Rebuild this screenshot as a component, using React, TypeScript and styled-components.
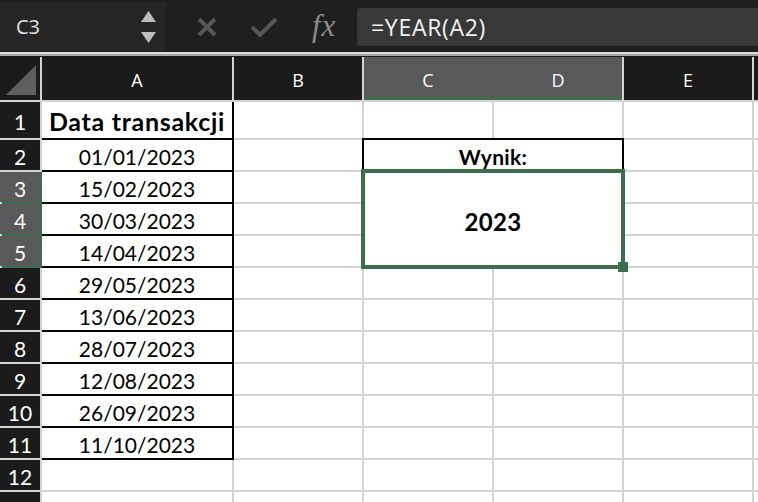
import * as React from "react";
import styled, { createGlobalStyle, css } from "styled-components";

const GREEN = "#3d6e4b";
const HILITE = "#595959";

const GlobalStyle = createGlobalStyle`
  html, body {
    margin: 0;
    padding: 0;
    background: #ffffff;
    overflow: hidden;
  }
  body {
    width: 758px;
    height: 502px;
    font-family: "Open Sans", "Liberation Sans", sans-serif;
  }
`;

const Page = styled.div`
  width: 758px;
  height: 502px;
  display: flex;
  flex-direction: column;
  overflow: hidden;
`;

const FormulaBar = styled.div`
  height: 51px;
  flex: none;
  display: flex;
  align-items: stretch;
  background: #1f1f1f;
  padding: 2px 0 0 0;
  box-sizing: border-box;
`;

const NameBox = styled.div`
  width: 166px;
  display: flex;
  align-items: center;
  justify-content: space-between;
  padding: 0 10px 0 16px;
  box-sizing: border-box;
  background: #262626;
  color: #e4e4e4;
  font-size: 20px;
`;

const Stepper = styled.div`
  display: flex;
  flex-direction: column;
  gap: 10px;
`;

const Actions = styled.div`
  width: 191px;
  display: flex;
  align-items: center;
  padding-left: 30px;
  gap: 32px;
  box-sizing: border-box;
`;

const Fx = styled.span`
  font-family: "Liberation Serif", "DejaVu Serif", serif;
  font-style: italic;
  font-size: 31px;
  color: #8c8c8c;
  margin-left: 2px;
  margin-top: -2px;
  letter-spacing: 1px;
`;

const FormulaInput = styled.div`
  flex: 1;
  margin: 6px 0 5px 0;
  background: #383838;
  border-radius: 3px 0 0 3px;
  color: #f2f2f2;
  font-size: 23px;
  letter-spacing: 0.7px;
  display: flex;
  align-items: center;
  padding-left: 14px;
`;

const Divider = styled.div`
  height: 6px;
  flex: none;
  background: linear-gradient(#1f1f1f 0 1px, #dcdcdc 1px 3px, #a8a8a8 3px 5px, #1b1b1b 5px);
`;

const Sheet = styled.div`
  flex: 1;
  display: grid;
  grid-template-columns: 40px 190px 128px 128px 128px 128px 1fr;
  grid-template-rows: 43px 36px repeat(12, 30px);
  gap: 2px;
  background: #d3d3d3;
  overflow: hidden;
`;

const HeaderCell = styled.div<{ $active?: boolean; $joinRight?: boolean }>`
  background: ${(p) => (p.$active ? HILITE : "#1b1b1b")};
  color: #ffffff;
  font-size: 18px;
  display: flex;
  align-items: center;
  justify-content: center;
  padding-top: 2px;
  box-sizing: border-box;
  ${(p) =>
    p.$active &&
    css`
      box-shadow: inset 0 -3px 0 ${GREEN}
        ${p.$joinRight ? `, 2px 0 0 ${HILITE}, 2px -3px 0 ${HILITE} inset` : ""};
    `}
`;

const Corner = styled.div`
  background: #1b1b1b;
  display: flex;
  align-items: flex-end;
  justify-content: flex-end;
  padding: 0 4px 5px 0;
`;

const RowHead = styled.div<{ $active?: boolean }>`
  background: ${(p) => (p.$active ? HILITE : "#1b1b1b")};
  color: #ffffff;
  font-family: "Lato", "Open Sans", sans-serif;
  font-size: 21px;
  display: flex;
  align-items: center;
  justify-content: center;
  padding-top: 3px;
  box-sizing: border-box;
  ${(p) =>
    p.$active &&
    css`
      box-shadow: 2px 0 0 ${GREEN}, 2px 2px 0 ${GREEN};
    `}
`;

const Cell = styled.div<{ $bold?: boolean; $boxed?: boolean }>`
  background: #ffffff;
  color: #000000;
  font-family: "Lato", "Carlito", sans-serif;
  font-size: ${(p) => (p.$bold ? "25px" : "21px")};
  font-weight: ${(p) => (p.$bold ? 700 : 400)};
  letter-spacing: ${(p) => (p.$bold ? "0.7px" : "0")};
  display: flex;
  align-items: center;
  justify-content: center;
  padding-top: 2px;
  box-sizing: border-box;
  white-space: nowrap;
  ${(p) =>
    p.$boxed &&
    css`
      box-shadow: 2px 0 0 #000, 0 2px 0 #000, 2px 2px 0 #000;
    `}
`;

const Merged = styled.div<{ $col: string; $row: string }>`
  grid-column: ${(p) => p.$col};
  grid-row: ${(p) => p.$row};
  background: #ffffff;
  font-family: "Lato", "Carlito", sans-serif;
  font-weight: 700;
  display: flex;
  justify-content: center;
  position: relative;
  box-sizing: border-box;
`;

const LabelCell = styled(Merged)`
  align-items: flex-end;
  font-size: 21px;
  line-height: 1;
  padding-bottom: 3px;
  letter-spacing: 0.3px;
  box-shadow: 0 0 0 2px #000;
`;

const ResultCell = styled(Merged)`
  align-items: center;
  font-size: 24px;
  padding-top: 4px;
  letter-spacing: 0.3px;
  box-shadow: 0 0 0 3px ${GREEN}, inset 0 0 0 1px ${GREEN};
`;

const Handle = styled.div`
  position: absolute;
  right: -6px;
  bottom: -6px;
  width: 10px;
  height: 10px;
  background: ${GREEN};
`;

const columns = ["A", "B", "C", "D", "E", ""];

const dates = [
  "01/01/2023",
  "15/02/2023",
  "30/03/2023",
  "14/04/2023",
  "29/05/2023",
  "13/06/2023",
  "28/07/2023",
  "12/08/2023",
  "26/09/2023",
  "11/10/2023",
];

const Triangle = ({ d, fill }: { d: string; fill: string }) => (
  <svg width="15" height="11" viewBox="0 0 15 11">
    <path d={d} fill={fill} />
  </svg>
);

const App = () => {
  const rows = Array.from({ length: 13 }, (_, i) => i + 1);

  return (
    <Page>
      <GlobalStyle />
      <FormulaBar>
        <NameBox>
          <span>C3</span>
          <Stepper>
            <Triangle d="M7.5 0 L15 11 L0 11 Z" fill="#bdbdbd" />
            <Triangle d="M0 0 L15 0 L7.5 11 Z" fill="#bdbdbd" />
          </Stepper>
        </NameBox>
        <Actions>
          <svg width="22" height="22" viewBox="0 0 22 22">
            <path d="M3 3 L19 19 M19 3 L3 19" stroke="#565656" strokeWidth="4" />
          </svg>
          <svg width="28" height="22" viewBox="0 0 28 22">
            <path d="M2 11 L10 19 L26 3" stroke="#565656" strokeWidth="4" fill="none" />
          </svg>
          <Fx>fx</Fx>
        </Actions>
        <FormulaInput>=YEAR(A2)</FormulaInput>
      </FormulaBar>
      <Divider />
      <Sheet>
        <Corner>
          <svg width="30" height="30" viewBox="0 0 30 30">
            <path d="M30 0 L30 30 L0 30 Z" fill="#5f5f5f" />
          </svg>
        </Corner>
        {columns.map((c) => (
          <HeaderCell key={c || "F"} $active={c === "C" || c === "D"} $joinRight={c === "C"}>
            {c}
          </HeaderCell>
        ))}
        {rows.map((r) => (
          <React.Fragment key={r}>
            <RowHead $active={r >= 3 && r <= 5}>{r}</RowHead>
            {r === 1 && (
              <Cell $bold $boxed>
                Data transakcji
              </Cell>
            )}
            {r >= 2 && r <= 11 && <Cell $boxed>{dates[r - 2]}</Cell>}
            {r >= 12 && <Cell />}
            <Cell />
            {(r === 1 || r >= 6) && (
              <>
                <Cell />
                <Cell />
              </>
            )}
            {r === 2 && (
              <LabelCell $col="4 / 6" $row="3">
                Wynik:
              </LabelCell>
            )}
            {r === 3 && (
              <ResultCell $col="4 / 6" $row="4 / 7">
                2023
                <Handle />
              </ResultCell>
            )}
            <Cell />
            <Cell />
          </React.Fragment>
        ))}
      </Sheet>
    </Page>
  );
};

export default App;
